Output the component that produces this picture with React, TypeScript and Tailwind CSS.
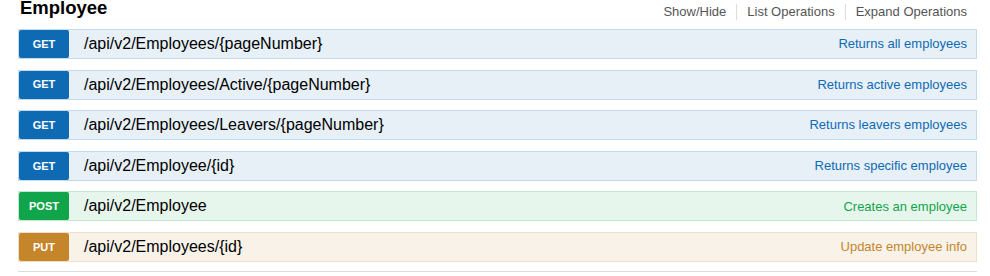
const ops = [
  { method: "GET", path: "/api/v2/Employees/{pageNumber}", summary: "Returns all employees" },
  { method: "GET", path: "/api/v2/Employees/Active/{pageNumber}", summary: "Returns active employees" },
  { method: "GET", path: "/api/v2/Employees/Leavers/{pageNumber}", summary: "Returns leavers employees" },
  { method: "GET", path: "/api/v2/Employee/{id}", summary: "Returns specific employee" },
  { method: "POST", path: "/api/v2/Employee", summary: "Creates an employee" },
  { method: "PUT", path: "/api/v2/Employees/{id}", summary: "Update employee info" },
];

const styles: Record<string, { row: string; badge: string; text: string }> = {
  GET: {
    row: "bg-[#e7f0f7] border-[#c3d9ec]",
    badge: "bg-[#0f6ab4]",
    text: "text-[#0f6ab4]",
  },
  POST: {
    row: "bg-[#e7f6ec] border-[#c3e8d1]",
    badge: "bg-[#10a54a]",
    text: "text-[#10a54a]",
  },
  PUT: {
    row: "bg-[#f9f2e9] border-[#f0e0ca]",
    badge: "bg-[#c5862b]",
    text: "text-[#c5862b]",
  },
};

export default function App() {
  return (
    <div
      className="w-[990px] h-[276px] bg-white pl-[18px] pr-[13px]"
      style={{ fontFamily: '"Liberation Sans", Arial, sans-serif' }}
    >
      <div className="flex items-start justify-between h-[25px] pl-[2px]">
        <h2 className="text-[18.5px] font-bold text-black leading-[16px]">Employee</h2>
        <ul className="flex items-center text-[13px] text-[#555] pr-[10px] mt-[3.5px]">
          <li className="pr-[10px] border-r border-[#ddd] leading-[16px]">Show/Hide</li>
          <li className="px-[10px] border-r border-[#ddd] leading-[16px]">List Operations</li>
          <li className="pl-[10px] leading-[16px]">Expand Operations</li>
        </ul>
      </div>
      <div className="flex flex-col gap-[10.6px] mt-[4px]">
        {ops.map((op) => {
          const s = styles[op.method];
          return (
            <div key={op.path} className={`flex items-center h-[30px] border ${s.row}`}>
              <span
                className={`w-[50px] h-[28px] flex items-center justify-center rounded-[2px] text-white text-[11px] font-bold ${s.badge}`}
              >
                {op.method}
              </span>
              <span className="ml-[15px] text-[16px] text-black">{op.path}</span>
              <span className={`ml-auto mr-[9px] text-[13px] ${s.text}`}>{op.summary}</span>
            </div>
          );
        })}
      </div>
      <div className="mt-[9px] border-t border-[#ddd]" />
    </div>
  );
}
